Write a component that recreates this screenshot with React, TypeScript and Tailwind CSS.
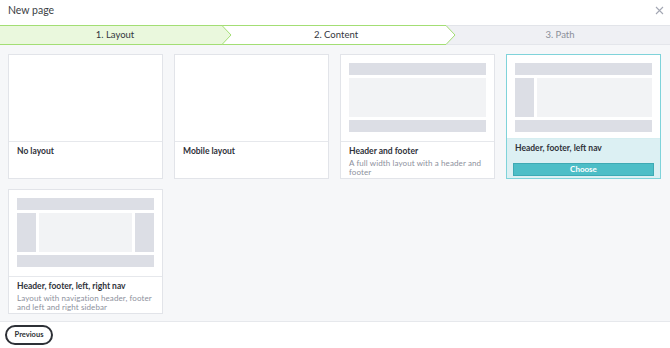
import React from 'react';

type Kind = 'none' | 'hf' | 'hfl' | 'hflr';

interface Layout {
    id: string;
    title: string;
    desc?: string;
    kind: Kind;
    selected?: boolean;
}

const layouts: Layout[] = [
    { id: 'none', title: 'No layout', kind: 'none' },
    { id: 'mobile', title: 'Mobile layout', kind: 'none' },
    { id: 'hf', title: 'Header and footer', desc: 'A full width layout with a header and footer', kind: 'hf' },
    { id: 'hfl', title: 'Header, footer, left nav', kind: 'hfl', selected: true },
    { id: 'hflr', title: 'Header, footer, left, right nav', desc: 'Layout with navigation header, footer and left and right sidebar', kind: 'hflr' },
];

const Preview: React.FC<{ kind: Kind }> = ({ kind }) => {
    if (kind === 'none') return <div className="h-[86px]" />;
    return (
        <div className="h-[86px] px-[8px] pt-[8px] flex flex-col gap-[3px]">
            <div className="h-[12px] bg-[#dcdee5]" />
            <div className="h-[39px] flex gap-[3px]">
                {kind !== 'hf' && <div className="w-[19px] bg-[#dcdee5]" />}
                <div className="flex-1 bg-[#f2f3f5]" />
                {kind === 'hflr' && <div className="w-[19px] bg-[#dcdee5]" />}
            </div>
            <div className="h-[12px] bg-[#dcdee5]" />
        </div>
    );
};

const Chevron: React.FC<{ fill: string }> = ({ fill }) => (
    <svg className="absolute -right-[10px] -top-px z-10" width="11" height="20" viewBox="0 0 11 20">
        <polygon points="0,0.5 1,0.5 10,10 1,19.5 0,19.5" fill={fill} />
        <polyline points="0,0.5 1,0.5 10,10 1,19.5 0,19.5" fill="none" stroke="#a3de74" strokeWidth="1" />
    </svg>
);

const App: React.FC = () => {
    return (
        <div className="w-[670px] h-[348px] flex flex-col bg-white text-[#33363d] overflow-hidden" style={{ fontFamily: 'Lato, "Open Sans", sans-serif' }}>
            <header className="h-[25px] flex items-start justify-between pl-[8px] pr-[6px] pt-[3px]">
                <h1 className="text-[10.5px] text-[#3c3f46]">New page</h1>
                <svg width="9" height="9" viewBox="0 0 9 9" className="mt-[3px]">
                    <path d="M1 1 L8 8 M8 1 L1 8" stroke="#a3a7b3" strokeWidth="1.1" />
                </svg>
            </header>

            <nav className="h-[20px] flex text-[9.5px]">
                <div className="relative w-[222px] flex items-center justify-center bg-[#eaf8dd] border-y border-[#a3de74]">
                    <span className="ml-[8px]">1. Layout</span>
                    <Chevron fill="#eaf8dd" />
                </div>
                <div className="relative w-[224px] flex items-center justify-center bg-white border-y border-[#a3de74]">
                    <span className="ml-[4px]">2. Content</span>
                    <Chevron fill="#ffffff" />
                </div>
                <div className="flex-1 flex items-center justify-center bg-[#eff0f4] border-t border-[#e2e4e9] border-b border-b-[#e4e6eb] text-[#8b8f99]">
                    <span className="ml-[4px]">3. Path</span>
                </div>
            </nav>

            <main className="flex-1 bg-[#f6f7f9] pl-[8px] pt-[9px] grid grid-cols-[repeat(4,155px)] auto-rows-[125px] gap-x-[11px] gap-y-[10px] content-start">
                {layouts.map(l => (
                    <div
                        key={l.id}
                        className={`flex flex-col border ${l.selected ? 'border-[#7fd3da] bg-white' : 'border-[#e2e4e9] bg-white'}`}
                    >
                        <Preview kind={l.kind} />
                        <div className={`flex-1 border-t ${l.selected ? 'border-[#d6eef1] bg-[#dcf0f3] px-[6px]' : 'border-[#e6e8ec] px-[8px]'} pt-[4px]`}>
                            <div className={`text-[8.5px] font-bold text-[#2f323a] leading-[11px] ${l.selected ? 'px-[2px]' : ''}`}>{l.title}</div>
                            {l.desc && (
                                <p className="mt-[2px] text-[8px] leading-[9px] tracking-[0.1px] text-[#8d919d]">{l.desc}</p>
                            )}
                            {l.selected && (
                                <button className="mt-[4px] w-full h-[13px] bg-[#4dbec7] border border-[#3eaab4] text-white text-[8px] font-bold leading-none">
                                    Choose
                                </button>
                            )}
                        </div>
                    </div>
                ))}
            </main>

            <footer className="h-[27px] border-t border-[#e6e8ec] flex items-center px-[5px]">
                <button className="h-[20px] w-[48px] rounded-full border-2 border-[#2d3036] text-[7.5px] font-bold text-[#2d3036]">
                    Previous
                </button>
            </footer>
        </div>
    );
};

export default App;
